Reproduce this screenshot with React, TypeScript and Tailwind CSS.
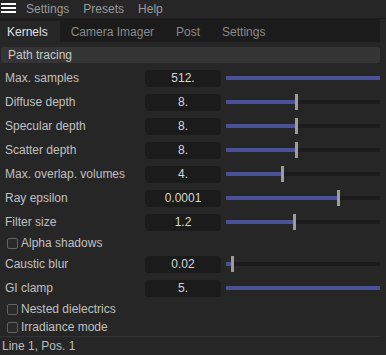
import { useState } from 'react'

type Row =
  | { kind: 'slider'; label: string; value: string; pct: number; handle: boolean }
  | { kind: 'check'; label: string }

const rows: Row[] = [
  { kind: 'slider', label: 'Max. samples', value: '512.', pct: 100, handle: false },
  { kind: 'slider', label: 'Diffuse depth', value: '8.', pct: 45.5, handle: true },
  { kind: 'slider', label: 'Specular depth', value: '8.', pct: 45.5, handle: true },
  { kind: 'slider', label: 'Scatter depth', value: '8.', pct: 45.5, handle: true },
  { kind: 'slider', label: 'Max. overlap. volumes', value: '4.', pct: 36.4, handle: true },
  { kind: 'slider', label: 'Ray epsilon', value: '0.0001', pct: 72.7, handle: true },
  { kind: 'slider', label: 'Filter size', value: '1.2', pct: 44, handle: true },
  { kind: 'check', label: 'Alpha shadows' },
  { kind: 'slider', label: 'Caustic blur', value: '0.02', pct: 4, handle: true },
  { kind: 'slider', label: 'GI clamp', value: '5.', pct: 100, handle: false },
  { kind: 'check', label: 'Nested dielectrics' },
  { kind: 'check', label: 'Irradiance mode' },
]

const tabs = [ 'Kernels', 'Camera Imager', 'Post', 'Settings' ]

const Slider = ( { pct, handle } : { pct : number, handle : boolean } ) => (
  <div className="relative flex-1 h-[16px] flex items-center">
    <div className="w-full h-[4px] bg-[#1b1b1b]">
      <div className="h-full bg-[#4b5196]" style={{ width: `${pct}%` }} />
    </div>
    {handle && (
      <div
        className="absolute top-0 w-[3px] h-[16px] bg-[#9c9c9c]"
        style={{ left: `calc(${pct}% - 1px)` }}
      />
    )}
  </div>
)

export default function App() {
  const [ active, setActive ] = useState( 0 )

  return (
    <div
      className="w-[386px] h-[355px] bg-[#262626] text-[12px] text-[#c0c0c0] flex flex-col overflow-hidden"
      style={{ fontFamily: '"Liberation Sans", Arial, sans-serif' }}
    >
      {/* menu bar */}
      <div className="h-[19px] flex items-center border-b border-[#1e1e1e] text-[#9a9a9a]">
        <div className="w-[15px] ml-[1px] flex flex-col gap-[2px] mb-[3px]">
          <div className="h-[2px] bg-white" />
          <div className="h-[2px] bg-white" />
          <div className="h-[2px] bg-white" />
        </div>
        <span className="ml-[10px]">Settings</span>
        <span className="ml-[14px]">Presets</span>
        <span className="ml-[14px]">Help</span>
      </div>

      <div className="flex-1 flex pr-[6px]">
        <div className="flex-1 flex flex-col">
          {/* tabs */}
          <div className="h-[23px] bg-[#1b1b1b] flex items-end">
            {tabs.map( ( t, i ) => (
              <div
                key={t}
                onClick={() => setActive( i )}
                className={
                  i === active
                    ? 'h-[21px] flex items-center pl-[7px] pr-[12px] bg-[#262626] text-[#e0e0e0]'
                    : 'h-[21px] flex items-center px-[11px] text-[#8a8a8a]'
                }
              >
                {t}
              </div>
            ) )}
          </div>

          {/* section heading */}
          <div className="mt-[5px] ml-[1px] h-[16px] bg-[#353535] rounded-[2px] flex items-center pl-[7px] text-[#c8c8c8]">
            Path tracing
          </div>

          <div className="mt-[3px] flex flex-col">
            {rows.map( ( r ) =>
              r.kind === 'slider' ? (
                <div key={r.label} className="h-[24px] flex items-center">
                  <div className="w-[145px] pl-[5px]">{r.label}</div>
                  <div className="w-[76px] h-[17px] rounded-[4px] bg-[#1b1b1b] flex items-center justify-center text-[#d6d6d6]">
                    {r.value}
                  </div>
                  <div className="w-[5px]" />
                  <Slider pct={r.pct} handle={r.handle} />
                </div>
              ) : (
                <div key={r.label} className="h-[18px] flex items-center pl-[7px]">
                  <div className="w-[11px] h-[11px] border border-[#636363] rounded-[2px] bg-[#2a2a2a]" />
                  <span className="ml-[3px]">{r.label}</span>
                </div>
              )
            )}
          </div>

          <div className="flex-1" />
          <div className="h-[19px] border-t border-[#333333] flex items-center pl-[2px] text-[#bdbdbd]">
            Line 1, Pos. 1
          </div>
        </div>
      </div>
    </div>
  )
}
